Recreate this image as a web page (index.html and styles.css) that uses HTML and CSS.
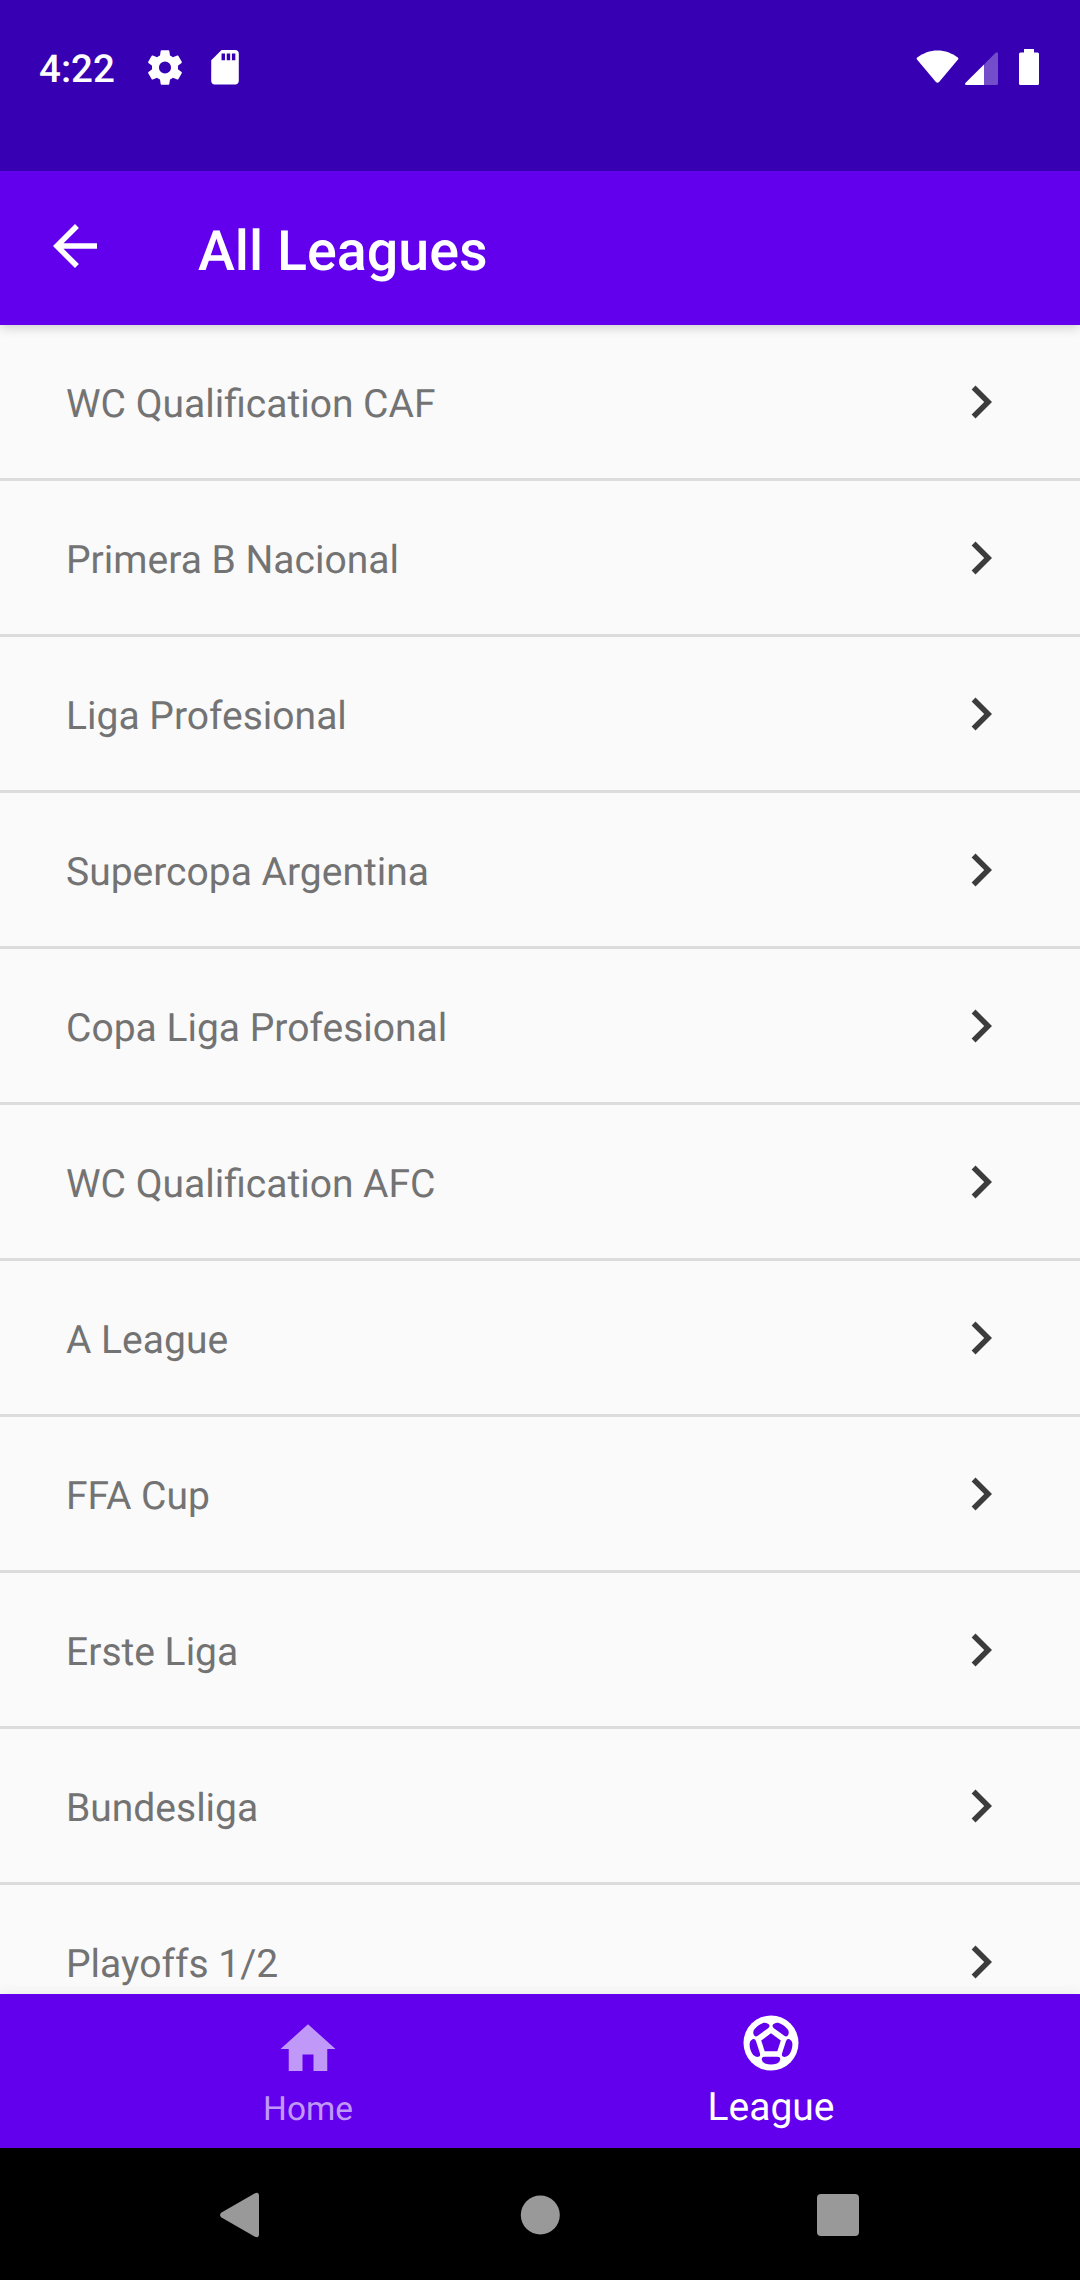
FILE: index.html
```html
<!DOCTYPE html>
<html lang="en">
<head>
<meta charset="utf-8">
<title>All Leagues</title>
<link rel="stylesheet" href="styles.css">
</head>
<body>
<svg class="sprite" aria-hidden="true">
  <symbol id="chevron" viewBox="0 0 24 24"><path d="M8.59 16.59 13.17 12 8.59 7.41 10 6l6 6-6 6z"/></symbol>
  <symbol id="panel" viewBox="0 0 66 66"><path d="M27 46.700H39Q42.500 46.700 42.200 49.500 41.600 52.500 39 53.600 33 55.600 27 53.600 24.400 52.500 23.800 49.500 23.500 46.700 27 46.700z"/></symbol>
</svg>
<div class="screen">
  <header class="status">
    <span class="clock">4:22</span>
    <svg class="gear" viewBox="2.2 2 19.6 20"><path fill-rule="evenodd" d="M19.43 12.98c.04-.32.07-.64.07-.98s-.03-.66-.07-.98l2.11-1.65c.19-.15.24-.42.12-.64l-2-3.46c-.12-.22-.39-.3-.61-.22l-2.49 1c-.52-.4-1.08-.73-1.69-.98l-.38-2.65C14.46 2.18 14.25 2 14 2h-4c-.25 0-.46.18-.49.42l-.38 2.65c-.61.25-1.17.59-1.69.98l-2.49-1c-.23-.09-.49 0-.61.22l-2 3.46c-.13.22-.07.49.12.64l2.11 1.65c-.04.32-.07.65-.07.98s.03.66.07.98l-2.11 1.65c-.19.15-.24.42-.12.64l2 3.46c.12.22.39.3.61.22l2.49-1c.52.4 1.08.73 1.69.98l.38 2.65c.03.24.24.42.49.42h4c.25 0 .46-.18.49-.42l.38-2.65c.61-.25 1.17-.59 1.69-.98l2.49 1c.23.09.49 0 .61-.22l2-3.46c.12-.22.07-.49-.12-.64zM12 15.5a3.5 3.5 0 1 1 0-7 3.5 3.5 0 0 1 0 7z"/></svg>
    <svg class="sd" viewBox="4 2 16 20"><path fill-rule="evenodd" d="M18 2h-8L4.02 8 4 20c0 1.100.9 2 2 2h12c1.100 0 2-.9 2-2V4c0-1.100-.9-2-2-2zM12 8h-2V4h2zM15 8h-2V4h2zM18 8h-2V4h2z"/></svg>
    <svg class="wifi" viewBox="0 0 43 33"><path d="M1.200 7.500C7 3 14 .4 21.500.4S36 3 41.800 7.500q1 .9.200 2L23.300 31.700q-1.800 2-3.600 0L1 9.500q-.8-1.100.2-2z"/></svg>
    <svg class="signal" viewBox="0 0 33 33"><path d="M19 12.500V33H1.500Q-.9 32.500.6 30.800z"/><path opacity=".3" d="M19 12.500 30.600.8Q33-.6 33 2V31.500q0 1.500-1.500 1.500H19z"/></svg>
    <svg class="battery" viewBox="0 0 20 36"><path d="M5 0h10v3.500h3.500q1.500 0 1.500 1.500v29.500q0 1.500-1.500 1.500h-17Q0 36 0 34.500V5q0-1.500 1.500-1.500H5z"/></svg>
  </header>
  <div class="appbar">
    <svg class="back" viewBox="0 0 24 24"><path d="M20 11H7.830l5.590-5.590L12 4l-8 8 8 8 1.410-1.410L7.830 13H20z"/></svg>
    <h1 class="title">All Leagues</h1>
  </div>
  <ul class="list">
    <li class="row"><span>WC Qualification CAF</span><svg class="chev"><use href="#chevron"/></svg></li>
    <li class="row"><span>Primera B Nacional</span><svg class="chev"><use href="#chevron"/></svg></li>
    <li class="row"><span>Liga Profesional</span><svg class="chev"><use href="#chevron"/></svg></li>
    <li class="row"><span>Supercopa Argentina</span><svg class="chev"><use href="#chevron"/></svg></li>
    <li class="row"><span>Copa Liga Profesional</span><svg class="chev"><use href="#chevron"/></svg></li>
    <li class="row"><span>WC Qualification AFC</span><svg class="chev"><use href="#chevron"/></svg></li>
    <li class="row"><span>A League</span><svg class="chev"><use href="#chevron"/></svg></li>
    <li class="row"><span>FFA Cup</span><svg class="chev"><use href="#chevron"/></svg></li>
    <li class="row"><span>Erste Liga</span><svg class="chev"><use href="#chevron"/></svg></li>
    <li class="row"><span>Bundesliga</span><svg class="chev"><use href="#chevron"/></svg></li>
    <li class="row"><span>Playoffs 1/2</span><svg class="chev"><use href="#chevron"/></svg></li>
  </ul>
  <nav class="tabs">
    <a class="tab"><svg class="tab-icon" viewBox="0 0 24 24"><path d="M10 20v-6h4v6h5v-8h3L12 3 2 12h3v8z"/></svg><span>Home</span></a>
    <a class="tab active"><svg class="tab-icon" viewBox="0 0 66 66"><circle cx="33" cy="33" r="27.500"/><g fill="#6200ee"><path d="M33 23.300 42.800 30.500 39.300 41.200H26.700L23.200 30.500z"/><use href="#panel" width="66" height="66"/><use href="#panel" width="66" height="66" transform="rotate(72 33 33)"/><use href="#panel" width="66" height="66" transform="rotate(144 33 33)"/><use href="#panel" width="66" height="66" transform="rotate(216 33 33)"/><use href="#panel" width="66" height="66" transform="rotate(288 33 33)"/></g></svg><span>League</span></a>
  </nav>
  <footer class="sysnav">
    <svg class="sys" viewBox="0 0 46 46"><path d="M4.500 20.500 37.500 1.500Q42-.5 42 3.500V42.500Q42 46.500 37.500 44.500L4.500 25.500Q1.500 23 4.500 20.500z"/></svg>
    <svg class="sys" viewBox="0 0 46 46"><circle cx="24.300" cy="23" r="19.500"/></svg>
    <svg class="sys" viewBox="0 0 46 46"><rect x="2" y="2" width="42" height="42" rx="4"/></svg>
  </footer>
</div>
</body>
</html>
```
FILE: styles.css
```css
* { box-sizing: border-box; }
body { margin: 0; font-family: Roboto, sans-serif; background: #fafafa; text-rendering: geometricPrecision; }
svg { display: block; flex: none; fill: currentColor; }
.sprite { display: none; }
.screen { width: 1080px; height: 2280px; display: flex; flex-direction: column; overflow: hidden; }

.status { height: 171px; flex: none; display: flex; align-items: flex-start; padding: 0 41px 0 39px; background: #3700b3; color: #fff; position: relative; z-index: 1; }
.clock { width: 108.5px; margin-top: 47px; font-size: 38.5px; font-weight: 500; line-height: 46px; }
.gear { width: 34px; height: 35px; margin-top: 50px; }
.sd { width: 28px; height: 34.500px; margin: 50px auto 0 29.500px; }
.wifi { width: 43px; height: 33px; margin-top: 50px; }
.signal { width: 33px; height: 33px; margin: 52px 21px 0 6px; }
.battery { width: 20px; height: 36px; margin-top: 49px; }

.appbar { height: 154px; flex: none; display: flex; align-items: flex-start; padding-left: 42px; background: #6200ee; color: #fff; box-shadow: 0 2px 11px rgba(0, 0, 0, .2); position: relative; }
.back { width: 66px; height: 66px; margin-top: 42px; }
.title { margin: 48px 0 0 90px; font-size: 55.6px; font-weight: 500; line-height: 64px; }

.list { flex: 1; min-height: 0; margin: 0; padding: 0; overflow: hidden; list-style: none; }
.row { height: 156px; display: flex; align-items: center; justify-content: space-between; padding: 0 66.500px 0 66px; border-bottom: 3px solid #dcdcdc; color: #737373; font-size: 39px; line-height: 46px; }
.row span { padding-top: 5px; }
.chev { width: 66px; height: 66px; color: #3c3c3c; }

.tabs { height: 154px; flex: none; display: flex; justify-content: center; padding-right: 1px; background: #6200ee; color: #fff; box-shadow: 0 2px 14px rgba(0, 0, 0, .1); position: relative; }
.tab { width: 463px; display: flex; flex-direction: column; align-items: center; padding-top: 22px; color: #c099f8; font-size: 33.4px; line-height: 40px; }
.tab span { margin-top: 8px; }
.tab-icon { width: 66px; height: 66px; }
.tab.active { padding-top: 16px; color: #fff; font-size: 39px; line-height: 46px; }
.tab.active span { margin-top: 8px; }

.sysnav { height: 132px; flex: none; display: flex; justify-content: space-between; align-items: center; padding: 1px 219px 0 217px; background: #000; color: #999; }
.sys { width: 46px; height: 46px; }
```
